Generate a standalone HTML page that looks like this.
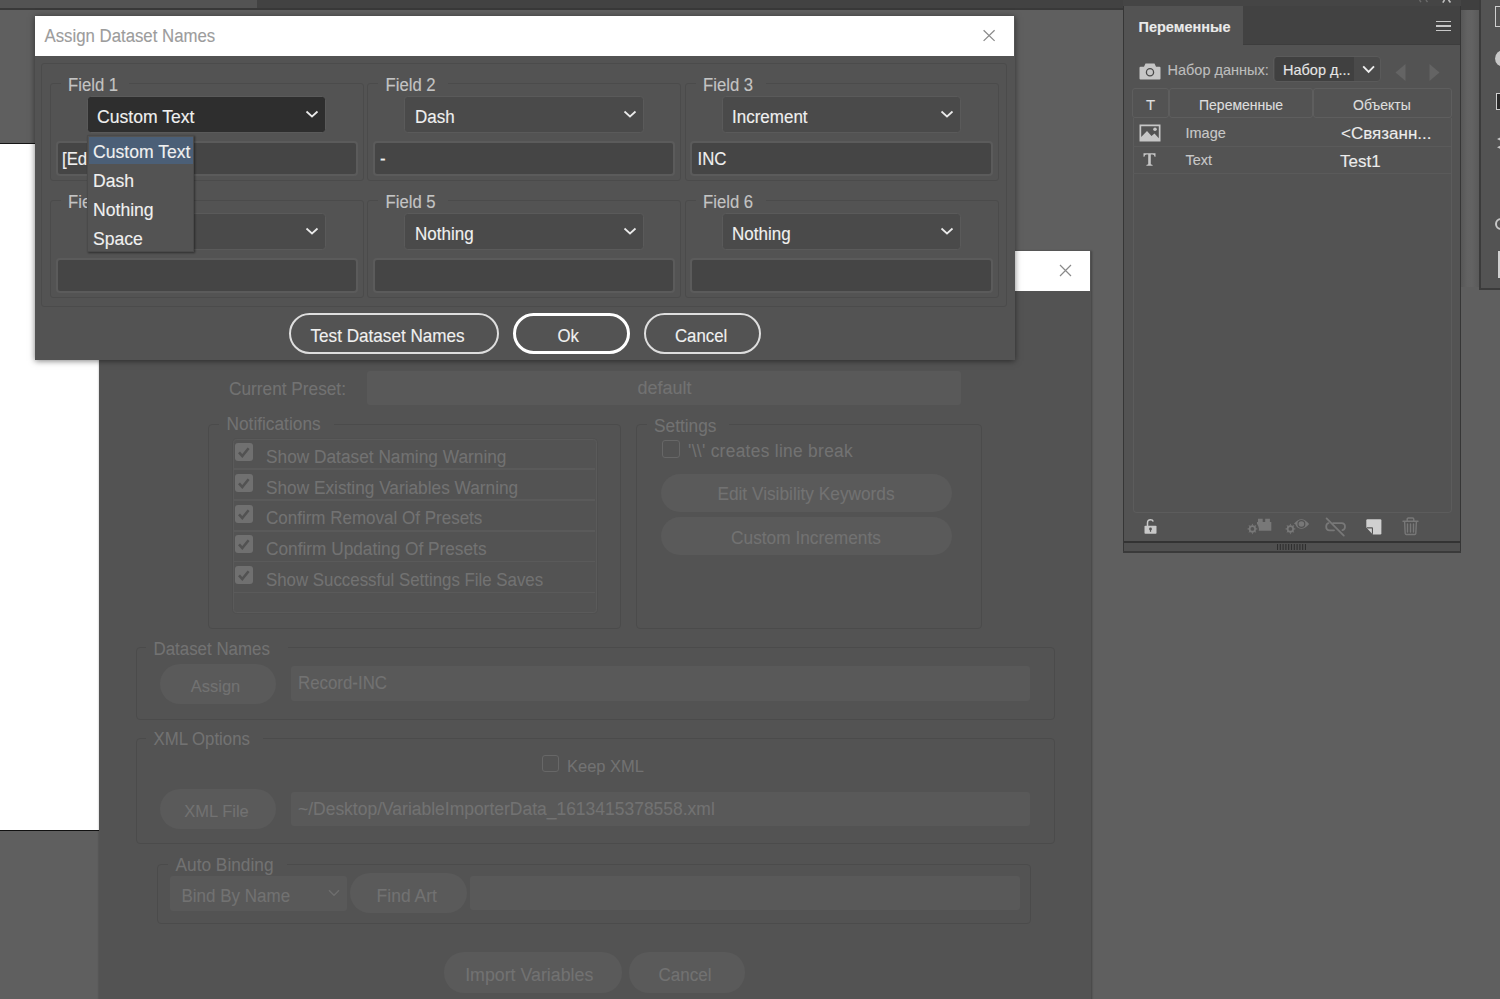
<!DOCTYPE html>
<html><head><meta charset="utf-8">
<style>
html,body{margin:0;padding:0;width:1500px;height:999px;overflow:hidden;background:#5f5f5f;font-family:"Liberation Sans",sans-serif;}
.a{position:absolute;box-sizing:border-box;}
.t{position:absolute;white-space:nowrap;line-height:1;-webkit-text-stroke:0.12px currentColor;}
.grp{border:1px solid #4b4b4b;border-radius:3px;}
.dd{border:1.5px solid #5a5a5a;border-radius:3.5px;background:#4a4a4a;}
.tf{border:2px solid #5b5b5b;border-radius:4px;background:#454545;}
.btn{border:2px solid #dedede;border-radius:21px;}
.g2{border:1.5px solid #4b4b4b;border-radius:4px;}
.db{background:#5a5a5a;border-radius:20px;}
.df{background:#595959;border-radius:3px;}
.cb{background:#707070;border-radius:3px;}
</style></head><body>
<div class="a " style="left:0px;top:0px;width:1500px;height:8px;background:#424242;"></div>
<div class="a " style="left:0px;top:0px;width:257px;height:8px;background:#535353;"></div>
<div class="a " style="left:0px;top:8px;width:1123px;height:2px;background:#393939;"></div>
<div class="a " style="left:0px;top:142.6px;width:100px;height:688.4px;background:#fff;border-top:1.2px solid #151515;border-bottom:1px solid #111;"></div>
<div class="a " style="left:99.2px;top:250.5px;width:992px;height:760px;background:#535353;box-shadow:0 0 2px 0.5px rgba(0,0,0,.3);"></div>
<div class="a " style="left:99.2px;top:250.5px;width:990.8px;height:40.7px;background:#fff;"></div>
<svg class="a" style="left:1059px;top:264px;" width="13" height="13" viewBox="0 0 13 13"><path d="M1 1L12 12M12 1L1 12" stroke="#8a8a8a" stroke-width="1.2" fill="none"/></svg>
<div class="t" style="left:229px;top:381px;font-size:17.25px;color:#727272;transform:scaleY(1.05);transform-origin:0 14.62px;">Current Preset:</div>
<div class="a df" style="left:366.5px;top:370.5px;width:594px;height:34.5px;"></div>
<div class="t" style="left:637.5px;top:379px;font-size:18px;color:#727272;transform:scaleY(1.05);transform-origin:0 15.00px;">default</div>
<div class="a g2" style="left:208px;top:423.5px;width:413px;height:205px;"></div>
<div class="a " style="left:219px;top:420px;width:115px;height:6px;background:#535353;"></div>
<div class="t" style="left:226.5px;top:416px;font-size:17.3px;color:#727272;transform:scaleY(1.05);transform-origin:0 14.65px;">Notifications</div>
<div class="a " style="left:232.5px;top:438.7px;width:364px;height:174.8px;border:1.5px solid #5a5a5a;border-radius:3.5px;box-shadow:0 0 0 0.6px #4e4e4e;"></div>
<div class="a " style="left:234px;top:468.3px;width:361px;height:1.4px;background:#5a5a5a;"></div>
<div class="a " style="left:234px;top:499.3px;width:361px;height:1.4px;background:#5a5a5a;"></div>
<div class="a " style="left:234px;top:530.3px;width:361px;height:1.4px;background:#5a5a5a;"></div>
<div class="a " style="left:234px;top:560.8px;width:361px;height:1.4px;background:#5a5a5a;"></div>
<div class="a " style="left:234px;top:591.6px;width:361px;height:1.4px;background:#5a5a5a;"></div>
<div class="a cb" style="left:235px;top:443.0px;width:18px;height:18px;"></div>
<svg class="a" style="left:235px;top:443.0px;" width="18" height="18" viewBox="0 0 18 18"><path d="M4 9.3L7.3 13L13.6 5.2" stroke="#525252" stroke-width="2.6" fill="none"/></svg>
<div class="t" style="left:266px;top:449px;font-size:17.29px;color:#727272;transform:scaleY(1.05);transform-origin:0 14.64px;">Show Dataset Naming Warning</div>
<div class="a cb" style="left:235px;top:473.75px;width:18px;height:18px;"></div>
<svg class="a" style="left:235px;top:473.75px;" width="18" height="18" viewBox="0 0 18 18"><path d="M4 9.3L7.3 13L13.6 5.2" stroke="#525252" stroke-width="2.6" fill="none"/></svg>
<div class="t" style="left:266px;top:480px;font-size:17.26px;color:#727272;transform:scaleY(1.05);transform-origin:0 14.63px;">Show Existing Variables Warning</div>
<div class="a cb" style="left:235px;top:504.5px;width:18px;height:18px;"></div>
<svg class="a" style="left:235px;top:504.5px;" width="18" height="18" viewBox="0 0 18 18"><path d="M4 9.3L7.3 13L13.6 5.2" stroke="#525252" stroke-width="2.6" fill="none"/></svg>
<div class="t" style="left:266px;top:510px;font-size:17.0px;color:#727272;transform:scaleY(1.05);transform-origin:0 14.00px;">Confirm Removal Of Presets</div>
<div class="a cb" style="left:235px;top:535.25px;width:18px;height:18px;"></div>
<svg class="a" style="left:235px;top:535.25px;" width="18" height="18" viewBox="0 0 18 18"><path d="M4 9.3L7.3 13L13.6 5.2" stroke="#525252" stroke-width="2.6" fill="none"/></svg>
<div class="t" style="left:266px;top:541px;font-size:17.26px;color:#727272;transform:scaleY(1.05);transform-origin:0 14.63px;">Confirm Updating Of Presets</div>
<div class="a cb" style="left:235px;top:566.0px;width:18px;height:18px;"></div>
<svg class="a" style="left:235px;top:566.0px;" width="18" height="18" viewBox="0 0 18 18"><path d="M4 9.3L7.3 13L13.6 5.2" stroke="#525252" stroke-width="2.6" fill="none"/></svg>
<div class="t" style="left:266px;top:573px;font-size:16.85px;color:#727272;transform:scaleY(1.05);transform-origin:0 13.93px;">Show Successful Settings File Saves</div>
<div class="a g2" style="left:636px;top:424px;width:346px;height:204.5px;"></div>
<div class="a " style="left:647px;top:420px;width:82px;height:6px;background:#535353;"></div>
<div class="t" style="left:654px;top:418px;font-size:17.3px;color:#727272;transform:scaleY(1.05);transform-origin:0 14.65px;">Settings</div>
<div class="a " style="left:661.6px;top:440px;width:18px;height:18px;border:1.4px solid #676767;border-radius:3px;"></div>
<div class="t" style="left:688px;top:443px;font-size:17.3px;color:#727272;transform:scaleY(1.05);transform-origin:0 14.65px;letter-spacing:0.33px;">'\\' creates line break</div>
<div class="a db" style="left:660.5px;top:473.5px;width:291px;height:38px;"></div>
<div class="t" style="left:660.5px;top:486px;font-size:17.28px;color:#727272;width:291px;text-align:center;transform:scaleY(1.05);transform-origin:0 14.64px;">Edit Visibility Keywords</div>
<div class="a db" style="left:660.5px;top:517px;width:291px;height:38px;"></div>
<div class="t" style="left:660.5px;top:530px;font-size:17.3px;color:#727272;width:291px;text-align:center;transform:scaleY(1.05);transform-origin:0 14.65px;">Custom Increments</div>
<div class="a g2" style="left:135.5px;top:647px;width:919px;height:72.5px;"></div>
<div class="a " style="left:146px;top:643px;width:141.5px;height:6px;background:#535353;"></div>
<div class="t" style="left:153.5px;top:642px;font-size:16.9px;color:#727272;transform:scaleY(1.05);transform-origin:0 13.95px;">Dataset Names</div>
<div class="a db" style="left:159.5px;top:663.5px;width:116px;height:40px;"></div>
<div class="t" style="left:157.5px;top:678px;font-size:16.5px;color:#727272;width:116px;text-align:center;transform:scaleY(1.05);transform-origin:0 14.25px;">Assign</div>
<div class="a df" style="left:291px;top:666px;width:738.5px;height:35px;"></div>
<div class="t" style="left:298px;top:676px;font-size:16.86px;color:#727272;transform:scaleY(1.05);transform-origin:0 13.93px;">Record-INC</div>
<div class="a g2" style="left:135.5px;top:738px;width:919px;height:106px;"></div>
<div class="a " style="left:146px;top:734px;width:117px;height:6px;background:#535353;"></div>
<div class="t" style="left:153.5px;top:732px;font-size:16.8px;color:#727272;transform:scaleY(1.05);transform-origin:0 13.90px;">XML Options</div>
<div class="a " style="left:541.5px;top:755.3px;width:17.2px;height:17.2px;border:1.4px solid #676767;border-radius:3px;"></div>
<div class="t" style="left:567px;top:758px;font-size:16.5px;color:#727272;transform:scaleY(1.05);transform-origin:0 14.25px;">Keep XML</div>
<div class="a db" style="left:159.5px;top:788.5px;width:116px;height:40px;"></div>
<div class="t" style="left:158.5px;top:803px;font-size:16.5px;color:#727272;width:116px;text-align:center;transform:scaleY(1.05);transform-origin:0 14.25px;">XML File</div>
<div class="a df" style="left:291px;top:791.5px;width:738.5px;height:34px;"></div>
<div class="t" style="left:298px;top:801px;font-size:17.48px;color:#727272;transform:scaleY(1.05);transform-origin:0 14.74px;">~/Desktop/VariableImporterData_1613415378558.xml</div>
<div class="a g2" style="left:157px;top:863.5px;width:874px;height:60px;"></div>
<div class="a " style="left:168px;top:860px;width:118.5px;height:6px;background:#535353;"></div>
<div class="t" style="left:175.5px;top:857px;font-size:17.3px;color:#727272;transform:scaleY(1.05);transform-origin:0 14.65px;">Auto Binding</div>
<div class="a df" style="left:169.5px;top:876px;width:177.5px;height:35px;"></div>
<div class="t" style="left:181.5px;top:888px;font-size:17px;color:#727272;transform:scaleY(1.05);transform-origin:0 14.00px;">Bind By Name</div>
<svg class="a" style="left:327.5px;top:889px;" width="12" height="8" viewBox="0 0 12 8"><path d="M1 1.2L6 6.2L11 1.2" stroke="#6e6e6e" stroke-width="1.4" fill="none"/></svg>
<div class="a db" style="left:350px;top:873px;width:116.5px;height:40px;"></div>
<div class="t" style="left:348.5px;top:888px;font-size:17.5px;color:#727272;width:116.5px;text-align:center;transform:scaleY(1.05);transform-origin:0 14.75px;">Find Art</div>
<div class="a df" style="left:470px;top:876px;width:549.5px;height:34px;"></div>
<div class="a db" style="left:443.5px;top:952px;width:178.5px;height:40.5px;"></div>
<div class="t" style="left:440px;top:967px;font-size:17.79px;color:#727272;width:178.5px;text-align:center;transform:scaleY(1.05);transform-origin:0 14.89px;">Import Variables</div>
<div class="a db" style="left:629px;top:952px;width:116px;height:40.5px;"></div>
<div class="t" style="left:627px;top:967px;font-size:17px;color:#727272;width:116px;text-align:center;transform:scaleY(1.05);transform-origin:0 14.00px;">Cancel</div>
<div class="a " style="left:34.8px;top:16px;width:980.5px;height:343.6px;background:#535353;box-shadow:0 1px 6px rgba(0,0,0,.5);"></div>
<div class="a " style="left:34.8px;top:16px;width:978.9px;height:40.4px;background:#fff;"></div>
<div class="t" style="left:44.5px;top:29px;font-size:16.8px;color:#9c9c9c;transform:scaleY(1.05);transform-origin:0 13.90px;">Assign Dataset Names</div>
<svg class="a" style="left:982px;top:28px;" width="15" height="15" viewBox="0 0 15 15"><path d="M1.6 2.2L12.6 12.9M12.6 2.2L1.6 12.9" stroke="#8a8a8a" stroke-width="1.25" fill="none"/></svg>
<div class="a grp" style="left:41px;top:63px;width:966px;height:244px;"></div>
<div class="a grp" style="left:50px;top:83px;width:314px;height:98px;"></div>
<div class="a " style="left:61px;top:80px;width:68px;height:6px;background:#535353;"></div>
<div class="t" style="left:68px;top:78px;font-size:16.7px;color:#c4c4c4;transform:scaleY(1.05);transform-origin:0 13.85px;">Field 1</div>
<div class="a grp" style="left:367px;top:83px;width:314px;height:98px;"></div>
<div class="a " style="left:378px;top:80px;width:70px;height:6px;background:#535353;"></div>
<div class="t" style="left:385.5px;top:78px;font-size:16.7px;color:#c4c4c4;transform:scaleY(1.05);transform-origin:0 13.85px;">Field 2</div>
<div class="a grp" style="left:685px;top:83px;width:314px;height:98px;"></div>
<div class="a " style="left:696px;top:80px;width:70px;height:6px;background:#535353;"></div>
<div class="t" style="left:703px;top:78px;font-size:16.7px;color:#c4c4c4;transform:scaleY(1.05);transform-origin:0 13.85px;">Field 3</div>
<div class="a grp" style="left:50px;top:200px;width:314px;height:98px;"></div>
<div class="a " style="left:61px;top:197px;width:68px;height:6px;background:#535353;"></div>
<div class="t" style="left:68px;top:195px;font-size:16.7px;color:#c4c4c4;transform:scaleY(1.05);transform-origin:0 13.85px;">Field 4</div>
<div class="a grp" style="left:367px;top:200px;width:314px;height:98px;"></div>
<div class="a " style="left:378px;top:197px;width:70px;height:6px;background:#535353;"></div>
<div class="t" style="left:385.5px;top:195px;font-size:16.7px;color:#c4c4c4;transform:scaleY(1.05);transform-origin:0 13.85px;">Field 5</div>
<div class="a grp" style="left:685px;top:200px;width:314px;height:98px;"></div>
<div class="a " style="left:696px;top:197px;width:70px;height:6px;background:#535353;"></div>
<div class="t" style="left:703px;top:195px;font-size:16.7px;color:#c4c4c4;transform:scaleY(1.05);transform-origin:0 13.85px;">Field 6</div>
<div class="a dd" style="left:86.5px;top:96.0px;width:239px;height:37px;background:#2e2e2e;"></div>
<svg class="a" style="left:304.5px;top:110.0px;" width="14" height="8" viewBox="0 0 14 8"><path d="M1.5 1.5L7 6.5L12.5 1.5" stroke="#eaeaea" stroke-width="1.7" fill="none"/></svg>
<div class="a dd" style="left:403.5px;top:96.0px;width:240.5px;height:37px;"></div>
<svg class="a" style="left:623.0px;top:110.0px;" width="14" height="8" viewBox="0 0 14 8"><path d="M1.5 1.5L7 6.5L12.5 1.5" stroke="#eaeaea" stroke-width="1.7" fill="none"/></svg>
<div class="a dd" style="left:721.5px;top:96.0px;width:239.5px;height:37px;"></div>
<svg class="a" style="left:940.0px;top:110.0px;" width="14" height="8" viewBox="0 0 14 8"><path d="M1.5 1.5L7 6.5L12.5 1.5" stroke="#eaeaea" stroke-width="1.7" fill="none"/></svg>
<div class="a dd" style="left:86.5px;top:212.5px;width:239px;height:37px;"></div>
<svg class="a" style="left:304.5px;top:226.5px;" width="14" height="8" viewBox="0 0 14 8"><path d="M1.5 1.5L7 6.5L12.5 1.5" stroke="#eaeaea" stroke-width="1.7" fill="none"/></svg>
<div class="a dd" style="left:403.5px;top:212.5px;width:240.5px;height:37px;"></div>
<svg class="a" style="left:623.0px;top:226.5px;" width="14" height="8" viewBox="0 0 14 8"><path d="M1.5 1.5L7 6.5L12.5 1.5" stroke="#eaeaea" stroke-width="1.7" fill="none"/></svg>
<div class="a dd" style="left:721.5px;top:212.5px;width:239.5px;height:37px;"></div>
<svg class="a" style="left:940.0px;top:226.5px;" width="14" height="8" viewBox="0 0 14 8"><path d="M1.5 1.5L7 6.5L12.5 1.5" stroke="#eaeaea" stroke-width="1.7" fill="none"/></svg>
<div class="t" style="left:97px;top:109px;font-size:17.6px;color:#f0f0f0;transform:scaleY(1.05);transform-origin:0 14.80px;">Custom Text</div>
<div class="t" style="left:415px;top:109px;font-size:17px;color:#f0f0f0;transform:scaleY(1.05);transform-origin:0 14.00px;">Dash</div>
<div class="t" style="left:732px;top:109px;font-size:17px;color:#f0f0f0;transform:scaleY(1.05);transform-origin:0 14.00px;">Increment</div>
<div class="t" style="left:415px;top:226px;font-size:17px;color:#f0f0f0;transform:scaleY(1.05);transform-origin:0 14.00px;">Nothing</div>
<div class="t" style="left:732px;top:226px;font-size:17px;color:#f0f0f0;transform:scaleY(1.05);transform-origin:0 14.00px;">Nothing</div>
<div class="a tf" style="left:55.5px;top:141.0px;width:302.5px;height:35px;"></div>
<div class="a tf" style="left:372.7px;top:141.0px;width:302.5px;height:35px;"></div>
<div class="a tf" style="left:690px;top:141.0px;width:303px;height:35px;"></div>
<div class="a tf" style="left:55.5px;top:257.5px;width:302.5px;height:35px;"></div>
<div class="a tf" style="left:372.7px;top:257.5px;width:302.5px;height:35px;"></div>
<div class="a tf" style="left:690px;top:257.5px;width:303px;height:35px;"></div>
<div class="t" style="left:62px;top:152px;font-size:16.8px;color:#f0f0f0;transform:scaleY(1.05);transform-origin:0 13.90px;">[Edit]</div>
<div class="t" style="left:380px;top:152px;font-size:16.8px;color:#f0f0f0;transform:scaleY(1.05);transform-origin:0 13.90px;">-</div>
<div class="t" style="left:697.5px;top:152px;font-size:16.8px;color:#f0f0f0;transform:scaleY(1.05);transform-origin:0 13.90px;">INC</div>
<div class="a btn" style="left:288.5px;top:313px;width:210px;height:41px;"></div>
<div class="a btn" style="left:512.5px;top:313px;width:117px;height:41px;border-width:3px;border-color:#fff;"></div>
<div class="a btn" style="left:643.5px;top:313px;width:117px;height:41px;"></div>
<div class="t" style="left:310.5px;top:328px;font-size:17.14px;color:#f0f0f0;transform:scaleY(1.05);transform-origin:0 14.57px;">Test Dataset Names</div>
<div class="t" style="left:557.5px;top:329px;font-size:16.8px;color:#f0f0f0;transform:scaleY(1.05);transform-origin:0 13.90px;">Ok</div>
<div class="t" style="left:675px;top:329px;font-size:16.8px;color:#f0f0f0;transform:scaleY(1.05);transform-origin:0 13.90px;">Cancel</div>
<div class="a " style="left:87px;top:135px;width:107px;height:117px;background:#535353;border:1px solid #4a4a4a;box-shadow:1px 1px 2px rgba(0,0,0,.45);"></div>
<div class="a " style="left:89px;top:137px;width:104px;height:27px;background:#4b5f77;"></div>
<div class="t" style="left:93px;top:144px;font-size:17.6px;color:#f0f0f0;transform:scaleY(1.05);transform-origin:0 14.80px;">Custom Text</div>
<div class="t" style="left:93px;top:173px;font-size:17.6px;color:#f0f0f0;transform:scaleY(1.05);transform-origin:0 14.80px;">Dash</div>
<div class="t" style="left:93px;top:202px;font-size:17.6px;color:#f0f0f0;transform:scaleY(1.05);transform-origin:0 14.80px;">Nothing</div>
<div class="t" style="left:93px;top:231px;font-size:17.6px;color:#f0f0f0;transform:scaleY(1.05);transform-origin:0 14.80px;">Space</div>
<!-- right strip -->
<div class="a" style="left:1123px;top:0;width:338px;height:6px;background:#454545;"></div>
<div class="a" style="left:1461px;top:0;width:18px;height:10px;background:#3f3f3f;"></div>
<div class="a" style="left:1461px;top:10px;width:17.5px;height:277px;background:linear-gradient(90deg,#575757,#626262 35%,#636363 60%,#5a5a5a);"></div>
<!-- far right toolbar -->
<div class="a" style="left:1478.5px;top:0;width:22px;height:290px;background:#535353;border-left:2px solid #3b3b3b;border-bottom:2px solid #3b3b3b;"></div>
<div class="a" style="left:1495px;top:6px;width:10px;height:21px;border:1.5px solid #cfcfcf;"></div>
<div class="a" style="left:1494.5px;top:49.5px;width:18px;height:17.5px;border-radius:50%;background:#c8c8c8;"></div>
<div class="a" style="left:1496px;top:92.5px;width:10px;height:17.5px;border:1.5px solid #cfcfcf;background:#2a2a2a;"></div>
<svg class="a" style="left:1496.5px;top:135.5px;" width="6" height="15" viewBox="0 0 6 15"><path d="M6 0L0 3L6 6Z M6 8.3L0 11.3L6 14.3Z" fill="#c8c8c8"/></svg>
<div class="a" style="left:1494.6px;top:217.8px;width:12.2px;height:12.2px;border:2.5px solid #c8c8c8;border-radius:50%;"></div>
<div class="a" style="left:1497.5px;top:251px;width:6px;height:27px;background:#d0d0d0;"></div>

<!-- panel -->
<div class="a" style="left:1123px;top:6px;width:338px;height:547px;background:#535353;border:1px solid #363636;border-top:none;"></div>
<div class="a" style="left:1124px;top:6px;width:336px;height:39px;background:#424242;border-bottom:1px solid #3d3d3d;"></div>
<div class="a" style="left:1124px;top:6px;width:119px;height:40px;background:#535353;"></div>
<div class="t" style="left:1138.5px;top:20px;font-size:14.5px;font-weight:bold;color:#eaeaea;">Переменные</div>
<svg class="a" style="left:1416px;top:0px;" width="40" height="4" viewBox="0 0 40 4"><path d="M3.5 0L5 2.2M10 0L11.5 2.2" stroke="#6a6a6a" stroke-width="1.4"/><path d="M28.5 0L26.8 2.6M32.5 0L34.5 2.6" stroke="#c0c0c0" stroke-width="1.6"/></svg>
<div class="a" style="left:1436px;top:20.5px;width:15px;height:1.6px;background:#c8c8c8;"></div>
<div class="a" style="left:1436px;top:25px;width:15px;height:1.6px;background:#c8c8c8;"></div>
<div class="a" style="left:1436px;top:29.5px;width:15px;height:1.6px;background:#c8c8c8;"></div>

<svg class="a" style="left:1138.5px;top:62.5px;" width="22" height="17" viewBox="0 0 22 17"><path d="M5 3.8L6.5 0.5H15.5L17 3.8H20.5Q21.5 3.8 21.5 4.8V15.5Q21.5 16.5 20.5 16.5H1.5Q0.5 16.5 0.5 15.5V4.8Q0.5 3.8 1.5 3.8Z" fill="#c6c6c6"/><circle cx="11" cy="9.2" r="3.6" fill="none" stroke="#4a4a4a" stroke-width="1.3"/></svg>
<div class="t" style="left:1167.5px;top:63.3px;font-size:14.5px;color:#bdbdbd;">Набор данных:</div>
<div class="a" style="left:1273.3px;top:55.8px;width:108px;height:26.5px;background:#4a4a4a;border:1.5px solid #5a5a5a;border-radius:4px;"></div>
<div class="a" style="left:1275px;top:57.2px;width:79px;height:24px;background:#404040;border-radius:3px 0 0 3px;"></div>
<div class="t" style="left:1283px;top:63.3px;font-size:14.5px;color:#e6e6e6;-webkit-text-stroke:0.12px currentColor;">Набор д...</div>
<svg class="a" style="left:1361.5px;top:65px;" width="13" height="9" viewBox="0 0 13 9"><path d="M1.2 1.3L6.6 6.8L12 1.3" stroke="#eeeeee" stroke-width="1.9" fill="none"/></svg>
<svg class="a" style="left:1395px;top:63.5px;" width="11" height="17" viewBox="0 0 11 17"><path d="M10.5 0L0.5 8.5L10.5 17Z" fill="#646464"/></svg>
<svg class="a" style="left:1428.5px;top:63.5px;" width="11" height="17" viewBox="0 0 11 17"><path d="M0.5 0L10.5 8.5L0.5 17Z" fill="#646464"/></svg>

<!-- header -->
<div class="a" style="left:1132px;top:87.5px;width:36.5px;height:30.5px;border:1px solid #5e5e5e;border-radius:3px;"></div>
<div class="a" style="left:1169px;top:87.5px;width:143.5px;height:30.5px;border:1px solid #5e5e5e;border-radius:3px;"></div>
<div class="a" style="left:1312.5px;top:87.5px;width:139px;height:30.5px;border:1px solid #5e5e5e;border-radius:3px;"></div>
<div class="t" style="left:1146px;top:97.3px;font-size:15px;color:#dedede;">T</div>
<div class="t" style="left:1199px;top:98px;font-size:14px;color:#dedede;">Переменные</div>
<div class="t" style="left:1353px;top:98px;font-size:14px;color:#dedede;">Объекты</div>

<!-- list -->
<div class="a" style="left:1132.5px;top:118px;width:319.5px;height:394.5px;border:1px solid #5c5c5c;border-top:none;border-radius:0 0 4px 4px;"></div>
<div class="a" style="left:1133px;top:146px;width:318px;height:1.2px;background:#5a5a5a;"></div>
<div class="a" style="left:1133px;top:172.5px;width:318px;height:1.2px;background:#5a5a5a;"></div>
<svg class="a" style="left:1138.5px;top:124px;" width="22" height="18" viewBox="0 0 22 18"><path d="M0.5 0.5H21.5V17.5H0.5Z" fill="#c6c6c6"/><path d="M2.2 2.2H19.8V14.3L15.5 9.5L12.5 12L8 7L2.2 13Z" fill="#535353"/><circle cx="16" cy="5.3" r="1.8" fill="#c6c6c6"/></svg>
<div class="t" style="left:1185.5px;top:126.1px;font-size:14.5px;color:#c8c8c8;">Image</div>
<div class="t" style="left:1341px;top:124.6px;font-size:17px;color:#ececec;">&lt;Связанн...</div>
<svg class="a" style="left:1143px;top:153px;" width="13" height="13" viewBox="0 0 13 13"><path d="M0.5 0.3H12.5V3.8H11.6Q11.4 1.6 9.5 1.6H7.8V11.3L9.6 11.9V12.7H3.4V11.9L5.2 11.3V1.6H3.5Q1.6 1.6 1.4 3.8H0.5Z" fill="#c6c6c6"/></svg>
<div class="t" style="left:1185.5px;top:152.8px;font-size:14.5px;color:#c8c8c8;">Text</div>
<div class="t" style="left:1340px;top:152.6px;font-size:17px;color:#ececec;">Test1</div>

<!-- footer -->
<svg class="a" style="left:1143.5px;top:518.5px;" width="13" height="15" viewBox="0 0 13 15"><path d="M3.5 7V4Q3.5 0.8 6.5 0.8Q8.6 0.8 9.3 2.5" stroke="#c8c8c8" stroke-width="1.5" fill="none"/><rect x="0.5" y="6.8" width="12" height="8" rx="0.8" fill="#c8c8c8"/><circle cx="6.5" cy="10" r="1.4" fill="#535353"/><rect x="5.9" y="10" width="1.2" height="2.8" fill="#535353"/></svg>
<svg class="a" style="left:1246px;top:517px;" width="27" height="19" viewBox="0 0 27 19"><path d="M11 5.1H12V1.8H16.7V5.1H19.2V1.8H23.9V5.1H25.3V13.7H11Z" fill="#787878"/><circle cx="6.4" cy="11.9" r="6.6" fill="#535353"/><g fill="#787878"><circle cx="6.4" cy="11.9" r="3.6"/><path d="M6.4 6.4L7.3 8.6H5.5Z M6.4 17.4L7.3 15.2H5.5Z M0.9 11.9L3.1 12.8V11Z M11.9 11.9L9.7 12.8V11Z M2.5 8L4.7 9.1L3.6 10.2Z M10.3 15.8L8.1 14.7L9.2 13.6Z M2.5 15.8L3.6 13.6L4.7 14.7Z M10.3 8L9.2 10.2L8.1 9.1Z"/></g><circle cx="6.4" cy="11.9" r="1.9" fill="#535353"/></svg>
<svg class="a" style="left:1284px;top:517px;" width="27" height="19" viewBox="0 0 27 19"><path d="M9.7 7Q17.4 -2.6 25.1 7Q17.4 16.6 9.7 7Z" fill="#787878"/><circle cx="17.4" cy="7" r="3.4" fill="none" stroke="#535353" stroke-width="1.2"/><circle cx="17.4" cy="7" r="1.9" fill="#787878"/><circle cx="6.4" cy="11.9" r="6.6" fill="#535353"/><g fill="#787878"><circle cx="6.4" cy="11.9" r="3.6"/><path d="M6.4 6.4L7.3 8.6H5.5Z M6.4 17.4L7.3 15.2H5.5Z M0.9 11.9L3.1 12.8V11Z M11.9 11.9L9.7 12.8V11Z M2.5 8L4.7 9.1L3.6 10.2Z M10.3 15.8L8.1 14.7L9.2 13.6Z M2.5 15.8L3.6 13.6L4.7 14.7Z M10.3 8L9.2 10.2L8.1 9.1Z"/></g><circle cx="6.4" cy="11.9" r="1.9" fill="#535353"/></svg>
<svg class="a" style="left:1324px;top:517px;" width="23" height="20" viewBox="0 0 23 20"><g stroke="#787878" stroke-width="1.8" fill="none" stroke-linecap="round"><path d="M4.5 6.2Q2.2 6.6 2.2 9.8Q2.2 13.3 5.5 13.3H10"/><path d="M9 6.2H17.5Q21 6.2 21 9.8Q21 12.6 18.5 13.2"/><path d="M2.6 1.4L19.8 18.6"/></g></svg>
<svg class="a" style="left:1365.5px;top:518.5px;" width="16" height="16" viewBox="0 0 16 16"><path d="M1.5 0.3H14.2Q15.4 0.3 15.4 1.5V14.3Q15.4 15.5 14.2 15.5H7L0.3 8.3V1.5Q0.3 0.3 1.5 0.3Z" fill="#d0d0d0"/><path d="M0.3 8.3L7 15.5V9.3Q7 8.3 6 8.3Z" fill="#535353"/><path d="M1.2 9.4H5.9V14.4Z" fill="#d0d0d0"/></svg>
<svg class="a" style="left:1402px;top:517px;" width="17" height="19" viewBox="0 0 17 19"><g stroke="#787878" stroke-width="1.4" fill="none" stroke-linecap="round"><path d="M1 4.2H16M5.2 4V2.2Q5.2 1 6.4 1H10.6Q11.8 1 11.8 2.2V4M2.6 4.8L3.2 16.5Q3.3 17.5 4.3 17.5H12.7Q13.7 17.5 13.8 16.5L14.4 4.8M5.5 7V15M8.5 7V15M11.5 7V15"/></g></svg>
<div class="a" style="left:1124px;top:541px;width:336px;height:2px;background:#333;"></div>
<div class="a" style="left:1124px;top:543px;width:336px;height:8.5px;background:#505050;"></div>
<div class="a" style="left:1123px;top:551px;width:338px;height:2px;background:#3a3a3a;"></div>
<svg class="a" style="left:1276.5px;top:544px;" width="29" height="6" viewBox="0 0 29 6"><g stroke="#2e2e2e" stroke-width="1.1"><path d="M0.5 0V6M3.3 0V6M6.1 0V6M8.9 0V6M11.7 0V6M14.5 0V6M17.3 0V6M20.1 0V6M22.9 0V6M25.7 0V6M28.5 0V6"/></g></svg>

</body></html>
